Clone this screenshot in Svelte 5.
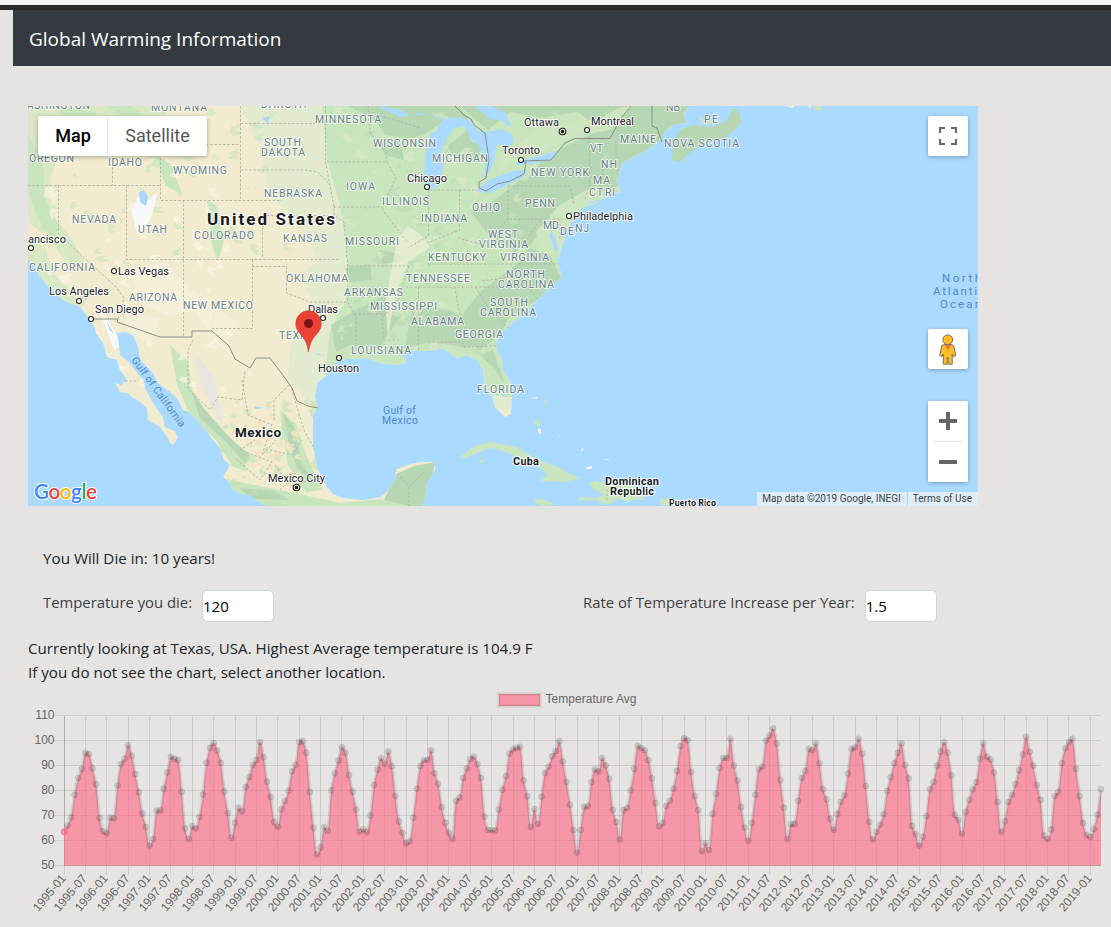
<script>
  let deathTemp = $state('120');
  let rate = $state('1.5');

  // Monthly average highs, one row per year from January 1995.
  const temps = [
    [63.5, 66, 69.3, 78.3, 85, 88.6, 95, 94.6, 88.9, 82.5, 69, 63.7],
    [62.9, 69.2, 68.8, 82, 90.6, 92.7, 98.2, 93.9, 86.6, 79.3, 70.8, 65.4],
    [58, 60.6, 72, 72, 80.7, 87.2, 93.5, 92.7, 92.2, 79.6, 64.8, 60.6],
    [65.8, 64.8, 69.4, 78.4, 91.1, 97.1, 99, 96, 91.1, 79.6, 71, 61.1],
    [67.1, 73.1, 71.6, 81.4, 85.4, 90.2, 92.2, 99.4, 93.3, 83.5, 77.4, 67.4],
    [65.5, 72.5, 75.8, 79.9, 87.7, 90.3, 99.3, 99.7, 95.1, 79.4, 65.1, 54.4],
    [57.2, 65.4, 63.8, 80, 86.9, 92, 97.3, 95.1, 86.2, 79.5, 72.4, 63.5],
    [64.5, 63.4, 70, 82.2, 88.3, 93, 90.6, 95.6, 89.7, 77.8, 67.6, 63.1],
    [58.8, 59.6, 69.1, 80.7, 89.8, 92.2, 92.2, 96.1, 86.9, 82.7, 73.4, 67.1],
    [63.1, 60.7, 75.9, 77.2, 85, 88.8, 92.6, 93.6, 90.6, 85, 69.5, 64.2],
    [64.2, 64, 72.4, 80.3, 85.7, 94.7, 96.5, 97.1, 97.5, 84, 77.7, 65.4],
    [72.6, 66.6, 77.5, 87, 89.6, 93.7, 95.8, 99.7, 91.6, 83.4, 74.3, 64.2],
    [55.1, 64.3, 73.5, 73.7, 83.3, 88.5, 87.6, 93, 90, 84.6, 72.3, 67.4],
    [60.4, 72.2, 73, 80, 88.6, 97.9, 97, 96.1, 92.1, 84.8, 75, 65.6],
    [67, 73.8, 75.9, 80.7, 87.8, 97.7, 101, 100.1, 87.4, 77.8, 72.1, 55.7],
    [59, 56.2, 70.7, 78.7, 89, 93, 93, 100.7, 90, 84, 73.4, 65.2],
    [59.9, 67, 78.3, 88.6, 89.6, 99.9, 102, 104.9, 98.8, 84.2, 73.1, 60.6],
    [66.6, 66.6, 75.8, 85, 87.8, 96.7, 96.1, 98.9, 90.9, 80.5, 76.5, 68.7],
    [64.2, 70.6, 75.5, 78.1, 86.8, 96.7, 97.2, 100.7, 94.7, 81.8, 67.4, 60.4],
    [63.5, 66.3, 70.5, 79.8, 85.3, 90.9, 95.1, 98.9, 90.2, 84.8, 65.8, 62.6],
    [58, 61.5, 69.8, 80.5, 83.4, 90, 95.6, 99.3, 95.1, 86.1, 70.2, 68.2],
    [62.7, 71.4, 76.3, 80.5, 83.3, 92.7, 98.9, 93.5, 92.4, 87.2, 75.4, 63.5],
    [67.7, 75.4, 78.3, 82.6, 88.1, 94.4, 101.5, 95.5, 90, 82.2, 76.3, 62],
    [60.6, 64.4, 77.8, 79.4, 90.9, 96.9, 99.3, 100.7, 88.6, 77.8, 67, 62.2],
    [61.4, 64.6, 70.3, 80.5]
  ].flat();

  const left = 64, right = 1101, base = 865.5;
  const step = (right - left) / (temps.length - 1);
  const points = temps.map((v, i) => ({ x: left + i * step, y: base - (v - 50) * 2.5 }));

  function spline(pts, tension = 0.4) {
    const cps = pts.map((p, i) => {
      const a = pts[Math.max(i - 1, 0)], b = pts[Math.min(i + 1, pts.length - 1)];
      const d0 = Math.hypot(p.x - a.x, p.y - a.y), d1 = Math.hypot(b.x - p.x, b.y - p.y);
      const f0 = (tension * d0) / (d0 + d1 || 1), f1 = (tension * d1) / (d0 + d1 || 1);
      return {
        px: p.x - f0 * (b.x - a.x), py: p.y - f0 * (b.y - a.y),
        nx: p.x + f1 * (b.x - a.x), ny: p.y + f1 * (b.y - a.y)
      };
    });
    let d = `M${pts[0].x} ${pts[0].y}`;
    for (let i = 1; i < pts.length; i++) {
      const c = cps[i - 1], n = cps[i];
      d += `C${c.nx.toFixed(2)} ${c.ny.toFixed(2)} ${n.px.toFixed(2)} ${n.py.toFixed(2)} ${pts[i].x.toFixed(2)} ${pts[i].y.toFixed(2)}`;
    }
    return d;
  }
  const line = spline(points);
  const area = `${line}L${right} ${base}L${left} ${base}Z`;

  const xTicks = [];
  for (let i = 0; i < temps.length; i += 6) {
    xTicks.push({ x: Math.round(left + i * step - 0.5) + 0.5, label: `${1995 + Math.floor(i / 12)}-${i % 12 ? '07' : '01'}` });
  }
  const yTicks = [110, 100, 90, 80, 70, 60, 50];

  // Terrain flecks, generated from a fixed seed.
  let seed = 11;
  const rnd = () => ((seed = (seed * 16807) % 2147483647) / 2147483647);
  function flecks(n, x0, x1, y0, y1, size) {
    let d = '';
    for (let i = 0; i < n; i++) {
      const x = x0 + rnd() * (x1 - x0), y = y0 + rnd() * (y1 - y0);
      const s = size * (0.3 + rnd());
      d += `M${x.toFixed(1)} ${y.toFixed(1)}`;
      for (let k = 0; k < 5; k++) {
        const a = (k / 5) * 6.28 + rnd() * 0.8, r = s * (0.4 + rnd() * 0.8);
        d += `L${(x + Math.cos(a) * r).toFixed(1)} ${(y + Math.sin(a) * r * 0.8).toFixed(1)}`;
      }
      d += 'Z';
    }
    return d;
  }
  const westPale = flecks(60, 50, 260, 170, 400, 7);
  const westGreen = flecks(70, 28, 290, 106, 270, 7);
  const mexGreen = flecks(45, 220, 320, 400, 506, 7);
  const mexTan = flecks(26, 240, 300, 410, 480, 6);
  const eastLight = flecks(60, 335, 520, 110, 350, 7);
  const eastDark = flecks(55, 335, 480, 110, 350, 8);
  const plains = flecks(20, 255, 320, 120, 350, 8);
  const seabord = flecks(26, 500, 640, 110, 300, 7);

  // [text, left, baseline, width]
  const states = [
    ['WASHINGTON', 17, 109, 73], ['MONTANA', 151, 110.5, 56], ['DAKOTA', 261, 107.5, 45],
    ['OREGON', 29, 162, 45], ['IDAHO', 108, 166, 34], ['WYOMING', 173, 174, 54],
    ['SOUTH', 264, 146, 37], ['DAKOTA', 261, 156, 44], ['NEBRASKA', 264, 197, 58],
    ['NEVADA', 72, 223, 44], ['UTAH', 138, 233, 29], ['COLORADO', 194, 239, 60],
    ['KANSAS', 283, 242, 44], ['CALIFORNIA', 29, 271, 66], ['ARIZONA', 129, 301, 48],
    ['NEW MEXICO', 183, 309, 70], ['OKLAHOMA', 286, 282, 62], ['TEXAS', 279, 339, 35],
    ['MINNESOTA', 315, 122.5, 66], ['WISCONSIN', 373, 147, 63], ['MICHIGAN', 432, 162, 56],
    ['IOWA', 346, 190, 29], ['ILLINOIS', 382, 205, 47], ['INDIANA', 421, 222, 46],
    ['OHIO', 472, 211, 28], ['MISSOURI', 345, 245, 54], ['WEST', 488, 238, 30],
    ['VIRGINIA', 479, 248, 49], ['KENTUCKY', 428, 261, 58], ['VIRGINIA', 500, 261, 49],
    ['TENNESSEE', 406, 282, 64], ['ARKANSAS', 344, 296, 59], ['MISSISSIPPI', 370, 310, 67],
    ['ALABAMA', 411, 325, 53], ['GEORGIA', 455, 338, 48], ['LOUISIANA', 351, 354, 60],
    ['NORTH', 506, 278, 39], ['CAROLINA', 498, 288, 56], ['SOUTH', 490, 306, 38],
    ['CAROLINA', 480, 316, 56], ['FLORIDA', 477, 393, 47], ['NB', 666, 111, 14],
    ['PE', 704, 123, 14], ['NOVA SCOTIA', 664, 147, 75], ['MAINE', 620, 143, 36],
    ['VT', 590, 152, 13], ['NH', 601, 168, 16], ['MA', 593, 184, 17], ['CT', 589, 196, 14],
    ['RI', 605, 196, 10], ['NEW YORK', 531, 176, 58], ['PENN', 525, 207, 30],
    ['MD', 543, 229, 16], ['DE', 560, 235, 14], ['NJ', 575, 232, 14]
  ];
  const cities = [
    ['Ottawa', 524, 126, 35], ['Montreal', 591, 125, 43], ['Toronto', 502, 154, 38],
    ['Chicago', 407, 182, 40], ['Philadelphia', 573, 220, 60], ['ancisco', 28, 243, 38],
    ['Las Vegas', 118, 275, 51], ['Los Angeles', 49, 295, 60], ['San Diego', 95, 313, 49],
    ['Dallas', 308, 313, 30], ['Houston', 318, 372, 41], ['Mexico City', 268, 482, 57]
  ];
  const dots = [[587, 130], [521, 160], [427, 187], [569, 216], [31, 248], [114, 271], [79, 301], [91, 319], [323, 318], [339, 358]];

  const mainland =
    'M28 106L28 260L33 264L40 277L50 288L63 300L80 307L88 317L95 328L96 333L103 343L107 357L117 360L120 370L127 380L121 385L115 383L120 392L127 393L133 398L140 402L147 408L148 420L160 427L168 438L170 443L173 445L178 438L175 431L165 427L163 417L153 403L145 388L144 380L137 373L130 363L120 355L119 345L117 333L124 332L133 335L138 347L140 360L153 373L157 382L163 387L170 392L177 398L183 410L189 412L197 420L207 432L213 440L220 448L224 460L230 465L223 477L229 482L233 490L242 494L250 495L258 501L267 506L423 506L425 497L427 483L431 477L435 470L435 462L421 462L410 464L395 470L396 479L387 492L380 497L363 500L343 498L333 494L327 487L317 467L313 447L313 415L318 407L315 397L317 383L327 375L330 368L337 362L346 359L367 358L380 363L397 365L407 362L400 353L417 350L430 351L443 348L457 358L467 355L477 360L483 370L485 387L492 395L495 407L505 417L511 414L512 390L510 381L503 370L501 358L497 350L497 340L500 333L513 322L527 313L531 306L537 300L550 287L562 277L558 263L561 250L564 240L570 223L580 210L590 201L603 199L612 193L620 192L617 180L622 163L637 155L650 148L660 140L666 130L675 124L687 123L683 113L690 106Z';
</script>

<div class="strip"></div>
<nav class="navbar">Global Warming Information</nav>

<main>
  <section class="map">
    <svg class="tiles" viewBox="28 106 950 400" width="950" height="400">
      <defs>
        <clipPath id="land"><path d={mainland} /></clipPath>
      </defs>
      <path d={mainland} fill="#f1ebcf" />
      <g clip-path="url(#land)">
        <path d="M240 106L262 150L268 195L290 215L310 240L318 262L300 275L312 300L290 345L288 380L318 410L700 410V106Z" fill="#e2ebcf" />
        <path d="M322 106L327 160L340 205L348 260L346 300L330 330L325 375L700 420V106Z" fill="#c9e5be" />
        <path d="M28 106H175L160 118L120 132L90 126L60 150L50 180L52 215L70 236L85 262L70 268L50 240L28 222Z" fill="#dbe8c4" />
        <path d="M28 135L42 160L46 200L60 228L52 240L36 215L28 190ZM52 106L75 122L100 145L112 150L96 112ZM106 106L135 125L146 116L132 106ZM132 140L155 150L165 185L183 195L170 164ZM207 200L217 206L224 240L218 262L212 245Z" fill="#c9e5be" />
        <path d="M28 237L45 248L55 275L70 290L88 298L80 310L28 300Z" fill="#d9e9c6" />
        <path d="M348 106L375 120L385 135L410 138L424 135L445 120L470 123L460 106ZM460 106H700V160L620 168L618 186L590 195L565 208L545 225L516 265L480 292L450 330L480 350L500 335L510 316L538 300L562 280L550 255L500 238L520 206L527 180L545 156L600 130L578 112L540 118L510 112L488 130L474 118Z" fill="#b7d7b4" />
        <path d="M448 146L467 130L485 142L478 158L455 162ZM375 138L400 140L404 160L385 155ZM470 210L495 200L520 180L548 188L560 218L535 230L515 252L486 232ZM356 310L385 295L402 315L378 348L350 345L336 352L331 325ZM412 308L450 310L482 330L470 348L430 342L405 348ZM480 355L493 350L505 385L494 368ZM396 474L414 466L435 462L427 506H395L384 500ZM380 250L400 254L398 262L382 264ZM345 268L370 264L372 280L350 282Z" fill="#b7d7b4" />
        <path d="M170 345L188 362L193 395L215 422L242 450L247 472L232 466L216 440L190 415L177 385ZM220 478L250 484L290 492L340 503L380 499L410 506H250ZM280 410L296 424L306 455L323 490L306 492L288 465Z" fill="#c9e5be" />
        <path d="M190 388L205 410L232 440L250 455L246 464L224 440L200 418ZM283 412L294 427L302 464L316 485L297 468L288 440ZM240 488L275 491L290 500L250 499Z" fill="#b7d7b4" />
        <path d="M193 350L212 375L224 420L220 422L203 390Z" fill="#e8e7df" />
        <path d="M536 232L560 205L590 188L602 188L580 210L568 240L560 255L540 250ZM540 126L600 119L618 108L632 106L610 130L570 136L540 155L524 148L498 175L503 158Z" fill="#cfe7c0" />
        <path d={westGreen} fill="#c9e5be" opacity=".6" />
        <path d={westPale} fill="#faf5e6" opacity=".65" />
        <path d={plains} fill="#f2e7ca" opacity=".4" />
        <path d={eastDark} fill="#b7d7b4" opacity=".45" />
        <path d={eastLight} fill="#e0eacb" opacity=".55" />
        <path d={seabord} fill="#c9e5be" opacity=".5" />
        <path d={mexGreen} fill="#c0e0b7" opacity=".55" />
        <path d={mexTan} fill="#f1e3c3" opacity=".85" />
        <path d="M130 270L165 262L190 290L214 300L210 335L195 310L170 316L145 306ZM215 310L240 322L225 345L238 360L212 340ZM125 310L160 318L150 345L128 330ZM398 237L408 226L420 234L430 247L408 262L394 300L388 340L385 302Z" fill="#f7f2de" opacity=".6" />
        <path d="M138 196L148 200L157 192L155 205L150 220L137 235L132 212ZM100 312L108 320L122 345L114 350Z" fill="#f7f8fa" />
        <path d="M139 192L144 190L148 197L146 206L140 202ZM106 320L114 334L110 330ZM254 406L264 408L255 409ZM316 353L324 356L318 355ZM262 118L268 123L270 116Z" fill="#a8d7fb" />
        <path d="M377 106L400 110L410 115L430 115L445 119L460 117L470 121L477 130L487 132L500 129L512 134L514 141L507 149L497 143L494 162L489 172L484 180L486 160L480 147L470 138L465 126L455 128L447 137L441 152L443 167L440 185L428 190L424 173L426 150L430 134L437 130L443 120L420 113L400 117L377 106ZM475 106L490 119L500 120L512 128L505 112L490 106Z" fill="#aadaff" />
        <path d="M477 190L489 180L513 171L527 170L523 177L507 185L490 193L479 192ZM516 163L524 160L547 154L557 151L551 160L530 164L517 165Z" fill="#aadaff" />
        <path d="M552 230L558 247L556 253L549 235ZM564 225L567 237L562 233ZM556 260L562 254L560 262ZM501 393L506 395L503 397Z" fill="#aadaff" />
      </g>
      <g fill="#c9e5be">
        <path d="M672 160L680 162L693 150L707 142L727 137L742 123L740 113L733 107L727 120L713 127L693 125L680 130L673 143Z" fill="#b7d7b4" />
        <path d="M697 115L705 121L720 120L714 125L702 123Z" />
        <path d="M582 206L602 200L596 204L584 207Z" />
        <path d="M460 457L473 447L490 442L502 444L517 447L533 457L540 460L560 468L568 473L580 478L566 482L540 481L547 475L537 465L513 455L500 450L490 448L478 453L466 458ZM479 459L485 461L481 463Z" />
        <path d="M588 483L596 481L606 484L627 483L640 490L645 500L636 499L628 502L618 499L607 505L597 500L578 500L580 497L598 498L603 495L595 490ZM660 499H669V505H660ZM533 500L543 499L554 504L548 506H540Z" />
        <path d="M534 421L539 420L540 427L535 425ZM545 397L547 403L544 407Z" />
        <path d="M813 106H822L820 111L814 110Z" />
        <path d="M538 428L541 429L541 435L538 432ZM530 398L538 397L537 399ZM558 435L561 437L558 436ZM582 448L584 449L581 452ZM605 458L611 461L606 460ZM587 467L593 466L591 469L586 469ZM786 106H795L792 108ZM809 106H812L808 109Z" fill="#f3f1e9" />
      </g>
      <g fill="none" stroke="#b0b2a4" stroke-width=".9" stroke-dasharray="2.5 1.8">
        <path d="M28 234M28 185.500H160.500M112.500 150V185.500M160.500 145V200.500H282M58.500 185.500V234L116 287L124 298L118 320M126.500 185.500V259.500H340M240.500 106V200M183.500 200V338M262.500 215.500V259M180 144.500H240M240.500 123.500H325M240.500 170H305L318 172L329 184M262.500 215.500H334M252.500 259.500V328.500H212M252 266.500H286.500V293L310 302L348 302M347.500 259.500V302L356 316V350M325.500 106V162L334 207V215L344 222L347 259M327 162H387L396 178L388 195L382 209L408 243M334 207H382M347 266H409M368 106L370 133L386 152L387 162M380 116L402 122L420 128M429 190H477M428.500 190V236L408 248M459.500 190V230L428 243M508 186V219H580M508 219L484 245L458 238M428 264H558M409 266L398 300L382 318L384 340H400M406 287H500M418.500 287V350M454.500 287L462 325M428 342H462L464 347L496 346M475 287L490 310L508 328M482 281L520 276L538 300M354 314H385M508 186H570L574 205M589.500 137V184L585 200M604 160L601 185M600 181H617M616 140V168M560 219V240M540 220L530 235L512 255M193 340L188 350V389L210 410L218 397L242 400L245 370M242 380L248 415L272 425L262 455L276 440M274 420L274 400L290 384L304 430L315 450M245 425L255 440L240 450L272 462L260 480L235 458M270 450L292 455L302 440M275 465L290 486L310 480M280 490L295 475M395 470L409 487L423 473M409 487V506M607 485V502M125 381H137" />
      </g>
      <g fill="none" stroke="#8b9087" stroke-width="1">
        <path d="M91 319L118 319L117 322L160 337H192V331H212L229 346L235 359L250 368L256 358L270 358L285 378L292 388L297 401L308 406L318 408" />
        <path d="M455 106L464 115L471 119L474 125L485 133L489 160L486 178L479 182V188L486 191L497 184L510 181L524 174L526 163L523 161L551 160L565 143L575 138.500H610L621 118L631 106M652 106V126L657 128L662 142" />
      </g>
      <g class="state">
        {#each states as [t, x, y, w]}
          <text {x} {y} textLength={w}>{t}</text>
        {/each}
      </g>
      <g class="water">
        <text x="383" y="413.500" textLength="33">Gulf of</text>
        <text x="382" y="423.500" textLength="36">Mexico</text>
        <text transform="translate(131 360) rotate(54)" textLength="84">Gulf of California</text>
        <g font-size="11.500">
          <text x="942" y="282" textLength="39">North</text>
          <text x="933" y="295" textLength="52">Atlantic</text>
          <text x="940" y="308" textLength="41">Ocean</text>
        </g>
      </g>
      <g class="city">
        {#each cities as [t, x, y, w]}
          <text {x} {y} textLength={w}>{t}</text>
        {/each}
      </g>
      <g fill="#fff" stroke="#222" stroke-width="1.100">
        {#each dots as [x, y]}<circle cx={x} cy={y} r="2.500" />{/each}
        {#each [[562.5, 131.500], [296.5, 487.500]] as [x, y]}
          <circle cx={x} cy={y} r="3.300" /><circle cx={x} cy={y} r="1.300" fill="#111" />
        {/each}
      </g>
      <g class="country">
        <text x="207" y="225" font-size="17" textLength="128">United States</text>
        <text x="235" y="437" font-size="13.500" textLength="46">Mexico</text>
        <text x="513" y="465" textLength="26">Cuba</text>
        <text x="605" y="485" textLength="54">Dominican</text>
        <text x="610" y="495" textLength="44">Republic</text>
        <text x="669" y="505.500" font-size="9" textLength="47">Puerto Rico</text>
      </g>
      <path d="M308.500 352C307 341 303.500 338 299.500 333C296.500 329.500 295.800 326.500 295.800 323.500A12.700 12.700 0 0 1 321.200 323.500C321.200 326.500 320.500 329.500 317.500 333C313.500 338 310 341 308.500 352Z" fill="#ea4335" stroke="#d03a30" stroke-width=".6" />
      <circle cx="308.500" cy="323.500" r="4.500" fill="#811411" />
      <text class="logo" x="34" y="498.500" textLength="63"><tspan fill="#4285f4">G</tspan><tspan fill="#ea4335">o</tspan><tspan fill="#fbbc05">o</tspan><tspan fill="#4285f4">g</tspan><tspan fill="#34a853">l</tspan><tspan fill="#ea4335">e</tspan></text>
    </svg>

    <div class="types"><button class="on">Map</button><button>Satellite</button></div>
    <button class="ctl full" aria-label="Toggle fullscreen view">
      <svg width="18" height="18" viewBox="0 0 18 18"><path d="M0 0H6V2H2V6H0ZM12 0H18V6H16V2H12ZM0 12H2V16H6V18H0ZM16 12H18V18H12V16H16Z" fill="#666" /></svg>
    </button>
    <button class="ctl peg" aria-label="Street View">
      <svg width="18" height="31" viewBox="0 0 18 31">
        <path d="M5.500 10.500L2.800 11.500L.8 21.500L3 22.500L4.300 20V30.200H8.200V23.500H9.200V30.200H13.200V20L14.400 22.500L16.800 21.500L14.600 11.500L12 10.500Z" fill="#fbbc25" stroke="#77705f" stroke-width="1" />
        <path d="M5.500 11H12.300L9 16.500Z" fill="#e27a35" />
        <circle cx="8.800" cy="5.800" r="4.900" fill="#fbbc25" stroke="#77705f" />
      </svg>
    </button>
    <div class="zoom">
      <button aria-label="Zoom in"><svg width="18" height="18" viewBox="0 0 18 18"><path d="M7 0H11V7H18V11H11V18H7V11H0V7H7Z" fill="#666" /></svg></button>
      <i></i>
      <button aria-label="Zoom out"><svg width="18" height="18" viewBox="0 0 18 18"><path d="M0 7H18V11H0Z" fill="#666" /></svg></button>
    </div>
    <div class="credits"><span>Map data ©2019 Google, INEGI</span><span>Terms of Use</span></div>
  </section>

  <p class="verdict">You Will Die in: 10 years!</p>
  <div class="fields">
    <label><span>Temperature you die:</span><input bind:value={deathTemp} /></label>
    <label><span>Rate of Temperature Increase per Year:</span><input bind:value={rate} /></label>
  </div>
  <p class="info">Currently looking at Texas, USA. Highest Average temperature is 104.9 F</p>
  <p class="info">If you do not see the chart, select another location.</p>

  <svg class="chart" viewBox="28 685 1083 242" width="1083" height="242">
    <rect x="499" y="694" width="41" height="12" fill="rgba(255,99,132,.6)" stroke="rgba(0,0,0,.1)" stroke-width="3" />
    <text x="545.500" y="703" textLength="91">Temperature Avg</text>
    <g stroke="rgba(0,0,0,.1)" shape-rendering="crispEdges">
      {#each yTicks as t}
        <line x1="54" x2="1101" y1={base - (t - 50) * 2.5} y2={base - (t - 50) * 2.5} />
      {/each}
      {#each xTicks as t}
        <line x1={t.x} x2={t.x} y1="716" y2="875" />
      {/each}
      <path d="M64.500 716V866M64 865.500H1101" stroke="rgba(0,0,0,.15)" />
    </g>
    {#each yTicks as t}
      <text x="54.500" y={base - (t - 50) * 2.5 + 3.500} text-anchor="end">{t}</text>
    {/each}
    {#each xTicks as t}
      <text transform="translate({t.x - 1} 876) rotate(-50)" text-anchor="end" y="4">{t.label}</text>
    {/each}
    <path d={area} fill="rgba(255,99,132,.6)" />
    <path d={line} fill="none" stroke="rgba(0,0,0,.1)" stroke-width="3" />
    {#each points as p, i}
      <circle cx={p.x} cy={p.y} r="3" fill={i ? 'rgba(0,0,0,.1)' : 'rgba(255,99,132,.6)'} stroke={i ? 'rgba(0,0,0,.1)' : 'rgba(255,99,132,.6)'} />
    {/each}
  </svg>
</main>

<style>
  :global(body) {
    background: #e5e4e2;
    font: 16px/24px 'Open Sans', 'Noto Sans', sans-serif;
    color: #212529;
    overflow: hidden;
  }
  .strip { height: 5px; background: #f1f3f4; border-bottom: 5px solid #2a2a2a; }
  .navbar {
    height: 56px;
    margin-left: 13px;
    padding-left: 16px;
    background: #343a40;
    color: #fff;
    font-size: 19px;
    line-height: 58px;
  }
  main { padding: 40px 0 0 28px; }
  .map {
    position: relative;
    width: 950px;
    height: 400px;
    overflow: hidden;
    background: #aadaff;
    font-family: Roboto, sans-serif;
  }
  .tiles { display: block; }
  .tiles text { font-family: Roboto, sans-serif; paint-order: stroke; stroke-linejoin: round; }
  .state { font-size: 10.5px; fill: #6c8186; stroke: rgba(255, 255, 255, .7); stroke-width: 2px; }
  .city { font-size: 11px; fill: #202124; stroke: rgba(255, 255, 255, .85); stroke-width: 2px; }
  .country { font-size: 11px; font-weight: 700; fill: #1b1b1b; stroke: rgba(255, 255, 255, .8); stroke-width: 2.5px; }
  .water { font-size: 10.5px; fill: #5286cb; }
  .tiles .logo { font: 600 20.5px Lato, sans-serif; stroke: #fff; stroke-width: 2px; }
  button { border: 0; padding: 0; background: #fff; display: flex; align-items: center; justify-content: center; }
  .types {
    position: absolute;
    left: 10px;
    top: 10px;
    display: flex;
    border-radius: 2px;
    overflow: hidden;
    box-shadow: 0 1px 4px rgba(0, 0, 0, .3);
  }
  .types button { height: 40px; width: 100px; padding-bottom: 1px; font: 18px Roboto, sans-serif; color: #565656; border-left: 1px solid #e6e6e6; }
  .types .on { width: 69px; padding-left: 1px; color: #000; font-weight: 500; border: 0; }
  .ctl, .zoom {
    position: absolute;
    right: 10px;
    width: 40px;
    height: 40px;
    border-radius: 2px;
    background: #fff;
    box-shadow: 0 1px 4px rgba(0, 0, 0, .3);
  }
  .full { top: 10px; }
  .peg { top: 223px; padding-right: 1px; }
  .zoom { top: 295px; height: 81px; }
  .zoom button { width: 40px; height: 40px; border-radius: 2px; }
  .zoom i { display: block; height: 1px; margin: 0 5px; background: #e6e6e6; }
  .credits {
    position: absolute;
    right: 0;
    bottom: 0;
    display: flex;
    font-size: 10px;
    line-height: 14px;
    color: #444;
    gap: 1px;
  }
  .credits span { background: rgba(245, 245, 245, .7); padding: 0 6px 0 5px; white-space: nowrap; }
  p { margin: 0; white-space: nowrap; }
  .verdict { margin: 40px 0 0 15px; font-size: 15.2px; }
  .fields { display: flex; margin: 20px 0 14px 15px; }
  .fields label { display: flex; flex: none; width: 540px; font-size: 14.85px; color: #3d4145; white-space: nowrap; }
  .fields span { margin-right: 10px; line-height: 25px; }
  input {
    box-sizing: border-box;
    width: 72px;
    height: 32px;
    border: 1px solid #ced4da;
    border-radius: 5px;
    background: #fff;
    padding: 1px 0;
    font: 15px 'Open Sans', sans-serif;
    color: #000;
  }
  .info { font-size: 15.14px; }
  .chart { display: block; margin-top: 1px; }
  .chart text { font: 12px 'Liberation Sans', Arial, sans-serif; fill: #666; }
</style>
